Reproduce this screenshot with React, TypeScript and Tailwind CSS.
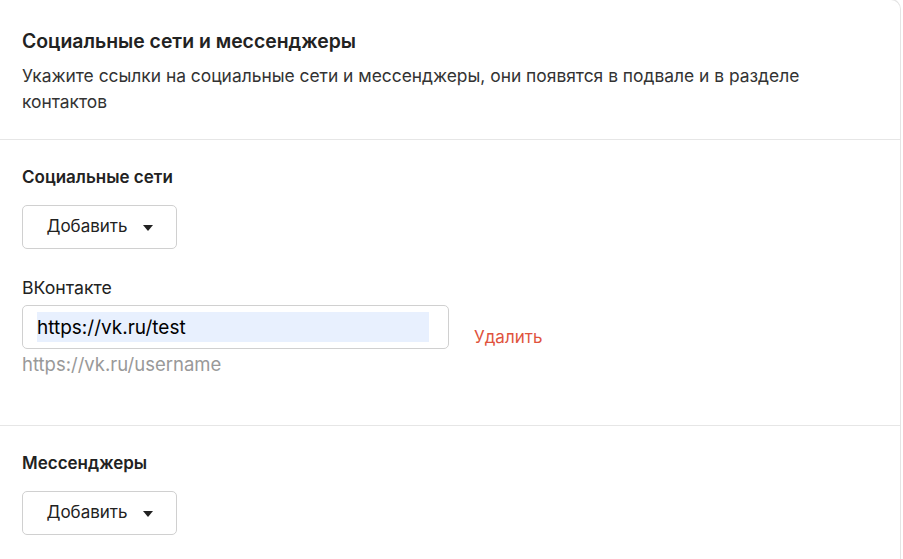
import { useState } from "react";

function AddButton() {
  return (
    <button
      type="button"
      className="flex h-[44px] w-[155px] items-center justify-center gap-[15px] rounded-[5px] border border-[#d0d0d0] bg-white text-[17px] text-[#222]"
    >
      Добавить
      <svg width="10" height="6" viewBox="0 0 10 6" className="mt-[1px]">
        <path d="M0 0h10L5 6z" fill="#222" />
      </svg>
    </button>
  );
}

export default function App() {
  const [vk, setVk] = useState("https://vk.ru/test");

  return (
    <div className="min-h-screen bg-white [font-family:Inter,'Noto_Sans',sans-serif]">
      <div className="mr-[2px] -mt-px rounded-tr-[10px] border-t border-r border-[#e4e4e4] bg-white text-[#222]">
        <div className="border-b border-[#e6e6e6] px-[22px] pt-[28px] pb-[24px]">
          <h1 className="text-[19.4px] leading-[26px] font-semibold">Социальные сети и мессенджеры</h1>
          <p className="mt-[9px] max-w-[830px] text-[17.4px] leading-[26px] text-[#333]">
            Укажите ссылки на социальные сети и мессенджеры, они появятся в подвале и в разделе контактов
          </p>
        </div>

        <div className="border-b border-[#e6e6e6] px-[22px] pt-[25px] pb-[50px]">
          <h2 className="text-[17px] leading-[24px] font-semibold">Социальные сети</h2>
          <div className="mt-[16px]">
            <AddButton />
          </div>

          <label className="mt-[28px] block text-[17.7px] leading-[22px] text-[#222]">ВКонтакте</label>
          <div className="mt-[6px] flex items-end gap-[25px]">
            <div>
              <div className="flex h-[44px] w-[427px] items-center rounded-[5px] border border-[#d0d0d0] pr-[19px] pl-[14px]">
                <input
                  value={vk}
                  onChange={(e) => setVk(e.target.value)}
                  className="h-[30px] w-full bg-[#e8f0fe] text-[19px] text-black outline-none"
                />
              </div>
              <p className="mt-[4px] text-[18.5px] leading-[22px] text-[#999]">https://vk.ru/username</p>
            </div>
            <button type="button" className="mb-[27px] text-[17px] leading-[22px] text-[#e0533d]">
              Удалить
            </button>
          </div>
        </div>

        <div className="px-[22px] pt-[25px] pb-[30px]">
          <h2 className="text-[17px] leading-[24px] font-semibold">Мессенджеры</h2>
          <div className="mt-[16px]">
            <AddButton />
          </div>
        </div>
      </div>
    </div>
  );
}
